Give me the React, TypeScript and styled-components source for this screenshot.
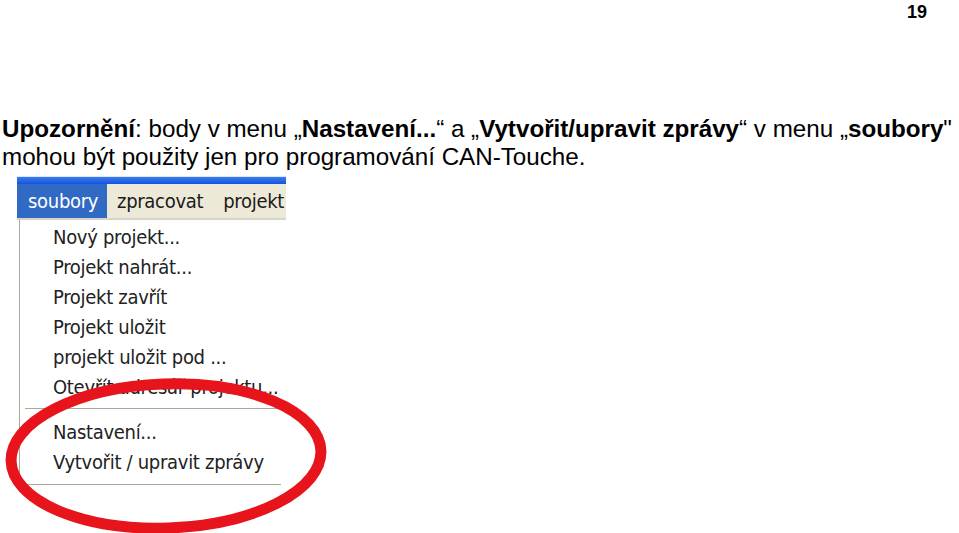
import React from 'react';
import styled, { createGlobalStyle } from 'styled-components';

const GlobalStyle = createGlobalStyle`
  html, body {
    margin: 0;
    padding: 0;
    background: #fff;
  }
  body {
    font-family: 'Liberation Sans', Arial, sans-serif;
    color: #000;
  }
`;

const Page = styled.div`
  position: relative;
  width: 959px;
  height: 533px;
  overflow: hidden;
`;

const PageNumber = styled.div`
  text-align: right;
  padding: 2px 32px 0 0;
  font-size: 18px;
  font-weight: bold;
  line-height: 20px;
`;

const Notice = styled.p`
  margin: 93px 0 0 2px;
  font-size: 24.2px;
  line-height: 28px;
  white-space: nowrap;

  b {
    font-weight: bold;
  }
`;

const Figure = styled.div`
  margin: 5px 0 0 17px;
  width: 269px;
`;

const TitleStrip = styled.div`
  height: 7px;
  background: linear-gradient(#3a7cf0, #1652df);
  border-top: 1px solid #dfe8f8;
`;

const MenuBar = styled.div`
  display: flex;
  height: 34px;
  background: #ece9d8;
  border-bottom: 2px solid #d8d4c6;
  overflow: hidden;
`;

const MenuTitle = styled.div<{ $active?: boolean }>`
  flex: none;
  padding: 0 ${(p) => (p.$active ? '11px' : '10px')};
  display: flex;
  align-items: center;
  font-family: 'DejaVu Sans Condensed', 'DejaVu Sans', sans-serif;
  font-size: 20px;
  letter-spacing: -0.3px;
  color: ${(p) => (p.$active ? '#fff' : '#1a1a1a')};
  background: ${(p) => (p.$active ? '#316ac5' : 'transparent')};
  width: ${(p) => (p.$active ? '68px' : 'auto')};
`;

const Dropdown = styled.div`
  margin-left: 2px;
  padding: 2px 0 6px;
  background: #fff;
  border-left: 1px solid #aca899;
`;

const Item = styled.div`
  height: 30px;
  line-height: 30px;
  padding-left: 33px;
  font-family: 'DejaVu Sans Condensed', 'DejaVu Sans', sans-serif;
  font-size: 20px;
  letter-spacing: -0.3px;
  color: #222;
  white-space: nowrap;
`;

const Separator = styled.div<{ $top: number; $bottom: number }>`
  height: 1px;
  margin: ${(p) => `${p.$top}px 5px ${p.$bottom}px 5px`};
  background: #aca899;
`;

const Ellipse = styled.svg`
  position: absolute;
  left: 0;
  top: 368px;
  width: 340px;
  height: 165px;
  pointer-events: none;
`;

const firstGroup = [
  'Nový projekt...',
  'Projekt nahrát...',
  'Projekt zavřít',
  'Projekt uložit',
  'projekt uložit pod ...',
  'Otevřít adresář projektu...',
];

const secondGroup = ['Nastavení...', 'Vytvořit / upravit zprávy'];

export default function App() {
  return (
    <Page>
      <GlobalStyle />
      <PageNumber>19</PageNumber>
      <Notice>
        <b>Upozornění</b>: body v menu „<b>Nastavení...</b>“ a „<b>Vytvořit/upravit zprávy</b>“ v menu „
        <b>soubory</b>"
        <br />
        mohou být použity jen pro programování CAN-Touche.
      </Notice>
      <Figure>
        <TitleStrip />
        <MenuBar>
          <MenuTitle $active>soubory</MenuTitle>
          <MenuTitle>zpracovat</MenuTitle>
          <MenuTitle>projekt</MenuTitle>
        </MenuBar>
        <Dropdown>
          {firstGroup.map((t) => (
            <Item key={t}>{t}</Item>
          ))}
          <Separator $top={6} $bottom={8} />
          {secondGroup.map((t) => (
            <Item key={t}>{t}</Item>
          ))}
          <Separator $top={7} $bottom={0} />
        </Dropdown>
      </Figure>
      <Ellipse viewBox="0 0 340 165">
        <ellipse
          cx="166"
          cy="88"
          rx="155"
          ry="72"
          fill="none"
          stroke="#e8141c"
          strokeWidth="11"
          transform="rotate(-2 166 88)"
        />
      </Ellipse>
    </Page>
  );
}
